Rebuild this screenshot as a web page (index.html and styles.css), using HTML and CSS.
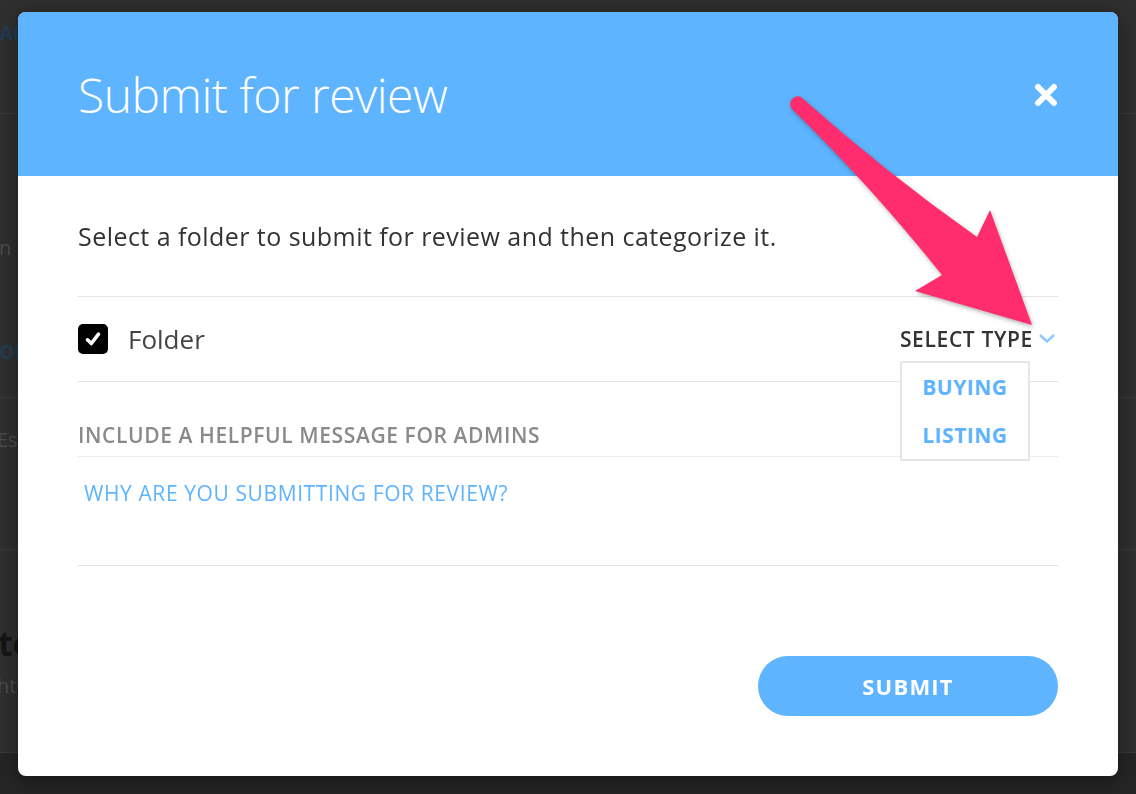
FILE: index.html
```html
<!DOCTYPE html>
<html lang="en">
<head>
    <meta charset="UTF-8">
    <meta name="viewport" content="width=device-width, initial-scale=1.0">
    <title>Submit for review</title>
    <link rel="stylesheet" href="styles.css">
</head>
<body>
    <!-- page behind the dialog, dimmed -->
    <div class="page">
        <div class="page-row row-top"><span class="nav-link">BACK TO LIST</span></div>
        <div class="page-row row-info">
            <p class="muted meta">Open in new window</p>
            <p class="tab-link">FOLDERS</p>
        </div>
        <div class="page-row row-est"><p class="muted est">Estimated value</p></div>
        <div class="page-row row-title">
            <h3 class="big">terms</h3>
            <p class="muted sub">https://</p>
        </div>
        <div class="page-foot"></div>
    </div>

    <div class="modal">
        <div class="modal-header">
            <h1>Submit for review</h1>
            <button class="close-btn" type="button">
                <svg width="24" height="24" viewBox="0 0 24 24">
                    <path d="M4 4 L20 20 M20 4 L4 20" stroke="#fff" stroke-width="6" stroke-linecap="round" fill="none"/>
                </svg>
            </button>
        </div>
        <div class="modal-body">
            <p class="intro">Select a folder to submit for review and then categorize it.</p>

            <div class="folder-row">
                <label class="folder">
                    <span class="checkbox">
                        <svg width="18" height="18" viewBox="0 0 18 18">
                            <path d="M3.5 9.8 L7.3 13.5 L14.5 4.2" stroke="#fff" stroke-width="3.6" stroke-linecap="round" stroke-linejoin="round" fill="none"/>
                        </svg>
                    </span>
                    Folder
                </label>
                <div class="type-select">
                    <span>SELECT TYPE</span>
                    <svg class="chevron" width="18" height="11" viewBox="0 0 18 11">
                        <path d="M2 2 L9 8.5 L16 2" stroke="#8ec9ff" stroke-width="2.6" fill="none"/>
                    </svg>
                    <ul class="type-menu">
                        <li>BUYING</li>
                        <li>LISTING</li>
                    </ul>
                </div>
            </div>

            <div class="message">
                <h4>INCLUDE A HELPFUL MESSAGE FOR ADMINS</h4>
                <div class="message-box">WHY ARE YOU SUBMITTING FOR REVIEW?</div>
            </div>

            <div class="actions">
                <button class="submit-btn" type="button">SUBMIT</button>
            </div>
        </div>
    </div>

    <!-- callout arrow drawn over the dialog -->
    <svg class="callout" width="1136" height="794" viewBox="0 0 1136 794">
        <path d="M801 97 Q885 172 977 237 L990 210 L1032 325 L915 291 L942 275 Q870 185 793 110 A7.7 7.7 0 0 1 801 97 Z" fill="#ff2d6e"/>
    </svg>
</body>
</html>
```

FILE: styles.css
```css
body {
    margin: 0;
    padding: 0;
    font-family: 'Open Sans', 'Liberation Sans', sans-serif;
    background: #2f2f2f;
    height: 794px;
    overflow: hidden;
}

/* dimmed page */
.page {
    display: flex;
    flex-direction: column;
    height: 100%;
}
.page-row {
    border-bottom: 1px solid #3a3a3a;
    box-sizing: border-box;
    overflow: hidden;
}
.row-top {
    height: 114px;
    padding-top: 20px;
}
.row-info {
    height: 284px;
}
.row-est {
    height: 152px;
}
.row-title {
    height: 203px;
}
.page-foot {
    flex: 1;
    background: #252525;
}
.nav-link {
    display: block;
    font-size: 19px;
    font-weight: 700;
    color: #223a55;
    text-indent: -13px;
    white-space: nowrap;
}
.page p, .page h3 {
    margin: 0;
    white-space: nowrap;
}
.muted {
    color: #4c4c4c;
    font-size: 20px;
}
.meta {
    padding-top: 120px;
    text-indent: -40px;
}
.tab-link {
    padding-top: 78px;
    font-size: 19px;
    font-weight: 700;
    color: #223a55;
    text-indent: -11px;
}
.est {
    padding-top: 28px;
    text-indent: -3px;
}
.big {
    padding-top: 70px;
    font-size: 34px;
    font-weight: 700;
    color: #151515;
    line-height: 46px;
    text-indent: -2px;
}
.sub {
    padding-top: 6px;
    text-indent: -3px;
}

/* dialog */
.modal {
    position: fixed;
    left: 18px;
    top: 12px;
    width: 1100px;
    height: 764px;
    background: #fff;
    border-radius: 8px;
    overflow: hidden;
    box-shadow: 0 4px 20px rgba(0, 0, 0, 0.4);
}
.modal-header {
    height: 164px;
    background: #5eb4ff;
    display: flex;
    justify-content: space-between;
    align-items: center;
    padding: 0 60px;
}
.modal-header h1 {
    margin: 0;
    font-size: 48px;
    font-weight: 300;
    color: #fff;
    letter-spacing: -0.5px;
}
.close-btn {
    background: none;
    border: none;
    padding: 0;
    width: 24px;
    height: 24px;
    margin-top: 2px;
    cursor: pointer;
}
.modal-body {
    padding: 0 60px;
}
.intro {
    margin: 0;
    padding: 45px 0 45px;
    font-size: 25px;
    line-height: 30px;
    letter-spacing: 0.45px;
    color: #333;
}
.folder-row {
    height: 84px;
    border-top: 1px solid #e5e5e5;
    border-bottom: 1px solid #e5e5e5;
    display: flex;
    justify-content: space-between;
    align-items: center;
}
.folder {
    display: flex;
    align-items: center;
    gap: 20px;
    font-size: 26px;
    color: #444;
}
.checkbox {
    width: 30px;
    height: 30px;
    background: #000;
    border-radius: 5px;
    display: flex;
    justify-content: center;
    align-items: center;
}
.type-select {
    position: relative;
    display: flex;
    align-items: center;
    gap: 5px;
    margin-right: 2px;
    font-size: 21px;
    font-weight: 600;
    line-height: 26px;
    letter-spacing: 0.65px;
    color: #333;
}
.chevron {
    margin-top: -2px;
}
.type-menu {
    position: absolute;
    left: 0;
    top: 35px;
    width: 130px;
    height: 100px;
    box-sizing: border-box;
    margin: 0;
    padding: 0;
    list-style: none;
    background: #fff;
    border: 2px solid #e6e6e6;
}
.type-menu li {
    height: 48px;
    display: flex;
    justify-content: center;
    align-items: center;
    font-size: 21px;
    font-weight: 700;
    color: #5eb4ff;
    letter-spacing: 0.5px;
}
.message h4 {
    margin: 0;
    padding: 40px 0 8px;
    font-size: 21px;
    font-weight: 600;
    line-height: 26px;
    letter-spacing: 0.6px;
    color: #8a8a8a;
    border-bottom: 1px solid #eeeeee;
}
.message-box {
    height: 109px;
    box-sizing: border-box;
    padding: 23px 6px 0;
    font-size: 21px;
    line-height: 26px;
    letter-spacing: 0.6px;
    color: #5eb4ff;
    border-bottom: 1px solid #e5e5e5;
}
.actions {
    display: flex;
    justify-content: flex-end;
    padding-top: 90px;
}
.submit-btn {
    width: 300px;
    height: 60px;
    border: none;
    border-radius: 30px;
    background: #5eb4ff;
    color: #fff;
    font-family: 'Open Sans', 'Liberation Sans', sans-serif;
    font-size: 22px;
    font-weight: 700;
    letter-spacing: 1.2px;
    cursor: pointer;
}

/* arrow */
.callout {
    position: fixed;
    left: 0;
    top: 0;
    pointer-events: none;
    filter: drop-shadow(1px 2px 2px rgba(0, 0, 0, 0.3));
}
```
